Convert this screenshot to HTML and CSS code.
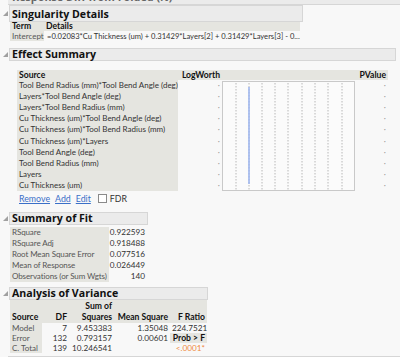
FILE: index.html
```html
<!DOCTYPE html>
<html lang="en">
<head>
    <meta charset="UTF-8">
    <meta name="viewport" content="width=device-width, initial-scale=1.0">
    <title>Fit Least Squares</title>
    <link rel="stylesheet" href="styles.css">
</head>
<body>
    <div class="cut-head"><span>Response Diff from Folded (N)</span></div>

    <div class="outline sing">
        <div class="outline-head"><i class="tri"></i><div class="title">Singularity Details</div></div>
        <table class="tbl sing-tbl">
            <colgroup><col class="c1"><col class="c2"></colgroup>
            <tr class="hd"><th>Term</th><th>Details</th></tr>
            <tr><td class="lbl">Intercept</td><td class="det">=0.02083*Cu Thickness (um) + 0.31429*Layers[2] + 0.31429*Layers[3] - 0...</td></tr>
        </table>
    </div>

    <div class="outline effect">
        <div class="outline-head"><i class="tri"></i><div class="title">Effect Summary</div></div>
        <table class="tbl eff-tbl">
            <colgroup><col class="c1"><col class="c2"><col class="c3"><col class="c4"></colgroup>
            <tr class="hd">
                <th>Source</th>
                <th class="lw">LogWorth</th>
                <th class="chart-hd"></th>
                <th class="pv">PValue</th>
            </tr>
            <tr>
                <td class="lbl">Tool Bend Radius (mm)*Tool Bend Angle (deg)</td>
                <td class="lw dot">·</td>
                <td class="chart" rowspan="10">
                    <svg width="133" height="111" viewBox="0 0 133 111">
                        <rect x="0.5" y="1.5" width="132" height="109" fill="#fbfbfb" stroke="#c9c9c9"/>
                        <g stroke="#b8b8b8" stroke-dasharray="1.5 1.5">
                            <line x1="14" y1="3" x2="14" y2="110"/>
                            <line x1="27" y1="3" x2="27" y2="110"/>
                            <line x1="40" y1="3" x2="40" y2="110"/>
                            <line x1="53" y1="3" x2="53" y2="110"/>
                            <line x1="66" y1="3" x2="66" y2="110"/>
                            <line x1="80" y1="3" x2="80" y2="110"/>
                            <line x1="93" y1="3" x2="93" y2="110"/>
                            <line x1="106" y1="3" x2="106" y2="110"/>
                            <line x1="120" y1="3" x2="120" y2="110"/>
                        </g>
                        <line x1="27" y1="7" x2="27" y2="104" stroke="#9fb7ef" stroke-width="1.6"/>
                    </svg>
                </td>
                <td class="pv dot">·</td>
            </tr>
            <tr><td class="lbl">Layers*Tool Bend Angle (deg)</td><td class="lw dot">·</td><td class="pv dot">·</td></tr>
            <tr><td class="lbl">Layers*Tool Bend Radius (mm)</td><td class="lw dot">·</td><td class="pv dot">·</td></tr>
            <tr><td class="lbl">Cu Thickness (um)*Tool Bend Angle (deg)</td><td class="lw dot">·</td><td class="pv dot">·</td></tr>
            <tr><td class="lbl">Cu Thickness (um)*Tool Bend Radius (mm)</td><td class="lw dot">·</td><td class="pv dot">·</td></tr>
            <tr><td class="lbl">Cu Thickness (um)*Layers</td><td class="lw dot">·</td><td class="pv dot">·</td></tr>
            <tr><td class="lbl">Tool Bend Angle (deg)</td><td class="lw dot">·</td><td class="pv dot">·</td></tr>
            <tr><td class="lbl">Tool Bend Radius (mm)</td><td class="lw dot">·</td><td class="pv dot">·</td></tr>
            <tr><td class="lbl">Layers</td><td class="lw dot">·</td><td class="pv dot">·</td></tr>
            <tr><td class="lbl">Cu Thickness (um)</td><td class="lw dot">·</td><td class="pv dot">·</td></tr>
        </table>
        <div class="actions">
            <a href="#">Remove</a>
            <a href="#">Add</a>
            <a href="#">Edit</a>
            <label class="fdr"><span class="box"></span>FDR</label>
        </div>
    </div>

    <div class="outline fit">
        <div class="outline-head"><i class="tri"></i><div class="title">Summary of Fit</div></div>
        <table class="tbl fit-tbl">
            <colgroup><col class="c1"><col class="c2"></colgroup>
            <tr><td class="lbl">RSquare</td><td class="num">0.922593</td></tr>
            <tr><td class="lbl">RSquare Adj</td><td class="num">0.918488</td></tr>
            <tr><td class="lbl">Root Mean Square Error</td><td class="num">0.077516</td></tr>
            <tr><td class="lbl">Mean of Response</td><td class="num">0.026449</td></tr>
            <tr><td class="lbl">Observations (or Sum Wgts)</td><td class="num">140</td></tr>
        </table>
    </div>

    <div class="outline anova">
        <div class="outline-head"><i class="tri"></i><div class="title">Analysis of Variance</div></div>
        <table class="tbl anova-tbl">
            <colgroup><col class="c1"><col class="c2"><col class="c3"><col class="c4"><col class="c5"></colgroup>
            <tr class="hd top"><th></th><th></th><th class="num">Sum of</th><th></th><th></th></tr>
            <tr class="hd"><th>Source</th><th class="num">DF</th><th class="num">Squares</th><th class="num">Mean Square</th><th class="num">F Ratio</th></tr>
            <tr><td class="lbl">Model</td><td class="num">7</td><td class="num">9.453383</td><td class="num">1.35048</td><td class="num">224.7521</td></tr>
            <tr><td class="lbl">Error</td><td class="num">132</td><td class="num">0.793157</td><td class="num">0.00601</td><td class="num prob">Prob &gt; F</td></tr>
            <tr><td class="lbl">C. Total</td><td class="num">139</td><td class="num">10.246541</td><td></td><td class="num sig">&lt;.0001*</td></tr>
        </table>
    </div>

    <div class="next-head"></div>
</body>
</html>
```

FILE: styles.css
```css
body{
    margin: 0;
    background: #f8f8f8;
    font-family: Lato, "Open Sans", sans-serif;
    font-size: 8.2px;
    color: #333;
    overflow: hidden;
}

.cut-head{
    height: 4px;
    overflow: hidden;
    margin-left: 8px;
    background: #ebebeb;
    border-bottom: 1px solid #d6d6d6;
}
.cut-head span{
    display: block;
    margin-top: -11px;
    padding-left: 4px;
    font-family: "Open Sans", sans-serif;
    font-size: 10.8px;
    font-weight: bold;
    color: #666;
}

.outline-head{
    display: flex;
    align-items: center;
}
.tri{
    width: 0;
    height: 0;
    margin: 0 1px 0 3px;
    border-left: 5px solid transparent;
    border-bottom: 5px solid #a0a0a0;
}
.title{
    height: 11px;
    line-height: 11px;
    padding-left: 2px;
    border: 1px solid #d6d6d6;
    background: #ebebeb;
    font-family: "Open Sans", sans-serif;
    font-size: 10.6px;
    font-weight: bold;
    color: #111;
}

.tbl{
    border-collapse: collapse;
    table-layout: fixed;
    margin-left: 10px;
}
.tbl th, .tbl td{
    padding: 0 2px;
    white-space: nowrap;
    overflow: hidden;
}
.tbl th{
    text-align: left;
    font-size: 8.6px;
    font-weight: bold;
    color: #111;
}
.tbl .hd th{
    background: #e5e5e0;
}
.tbl .lbl{
    background: #e5e5e0;
    color: #555;
    font-size: 8px;
    padding: 0 1px 0 2px;
}
.tbl .num{
    text-align: right;
}

/* singularity */
.sing .title{
    width: 290px;
    height: 15px;
    line-height: 17px;
}
.sing-tbl{
    width: 290px;
}
.sing-tbl .c1{ width: 34px; }
.sing-tbl tr{
    height: 9px;
    line-height: 9px;
}
.sing-tbl tr + tr{
    height: 10px;
    line-height: 10px;
}
.sing-tbl td.det{
    font-size: 7.6px;
    padding-left: 3px;
}

/* effect summary */
.effect{
    margin-top: 7px;
}
.effect .title{
    width: 383px;
}
.eff-tbl{
    width: 371px;
    margin: 9px 0 0 17px;
}
.eff-tbl .c1{ width: 161px; }
.eff-tbl .c2{ width: 44px; }
.eff-tbl .c3{ width: 133px; }
.eff-tbl .c4{ width: 33px; }
.eff-tbl tr{
    height: 11px;
    line-height: 11px;
}
.eff-tbl .hd{
    height: 10px;
    line-height: 10px;
}
.eff-tbl .lbl{
    color: #333;
}
.eff-tbl .lw, .eff-tbl .pv{
    text-align: right;
}
.eff-tbl .chart{
    padding: 0;
    vertical-align: top;
}
.eff-tbl .chart svg{
    display: block;
}
.dot{
    color: #999;
}

.actions{
    display: flex;
    align-items: center;
    gap: 5px;
    margin: 2px 0 0 19px;
    height: 11px;
    font-size: 8.8px;
}
.actions a{
    color: #3a6fc8;
}
.fdr{
    display: flex;
    align-items: center;
    gap: 3px;
    margin-left: 2px;
    color: #333;
}
.fdr .box{
    width: 7px;
    height: 7px;
    border: 1px solid #8a8a8a;
    background: #fff;
}

/* summary of fit */
.fit{
    margin-top: 8px;
}
.fit .title{
    width: 135px;
}
.fit-tbl{
    width: 137px;
    margin-top: 2px;
}
.fit-tbl .c1{ width: 99px; }
.fit-tbl tr{
    height: 11px;
    line-height: 11px;
}
.fit-tbl .lbl{
    letter-spacing: -0.1px;
}
.fit-tbl .num{
    padding: 0 2px 0 0;
}

/* analysis of variance */
.anova{
    margin-top: 5px;
}
.anova .title{
    width: 195px;
}
.anova-tbl{
    width: 197px;
}
.anova-tbl .c1{ width: 32px; }
.anova-tbl .c2{ width: 27px; }
.anova-tbl .c3{ width: 45px; }
.anova-tbl .c4{ width: 56px; }
.anova-tbl .c5{ width: 37px; }
.anova-tbl tr{
    height: 10px;
    line-height: 10px;
}
.anova-tbl .hd{
    height: 11px;
    line-height: 11px;
}
.anova-tbl .hd.top th{
    padding-top: 1px;
}
.anova-tbl .prob{
    background: #e5e5e0;
    font-weight: bold;
    font-size: 8.6px;
    color: #111;
}
.anova-tbl .sig{
    color: #f08a3c;
}

.next-head{
    margin-top: 3px;
    height: 8px;
    background: #ebebeb;
    border-top: 1px solid #d6d6d6;
    margin-left: 8px;
}
```
